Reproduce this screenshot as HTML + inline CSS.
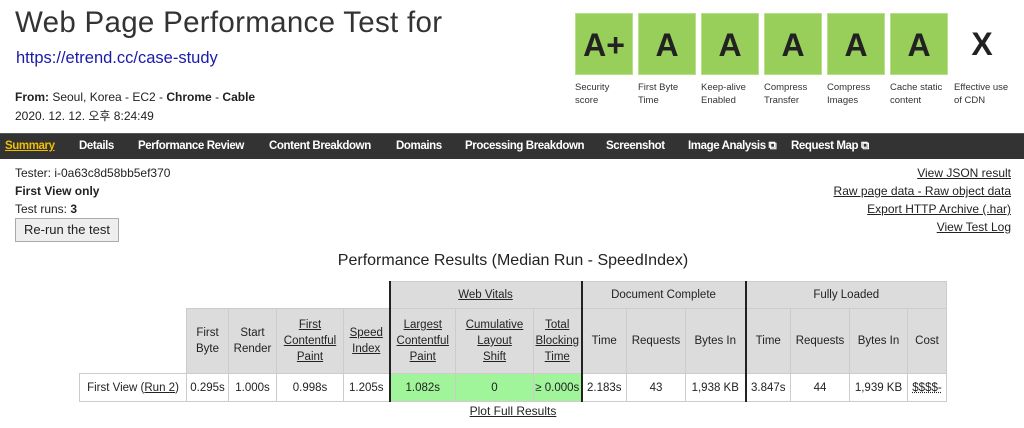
<!DOCTYPE html>
<html><head><meta charset="utf-8"><style>
*{margin:0;padding:0;box-sizing:border-box}
body{width:1024px;height:428px;background:#fff;font-family:"Liberation Sans","Noto Sans CJK KR",sans-serif;color:#222;position:relative;overflow:hidden}
.a{position:absolute;white-space:nowrap}
h1{position:absolute;left:15px;top:6px;font-weight:normal;font-size:29.5px;color:#333;letter-spacing:0.3px}
.url{left:16px;top:49px;font-size:16.5px;color:#1a1aa8}
.s12{font-size:12px}
.g{position:absolute;top:13px;width:58px;height:62px;background:#98cf5a;border:1px solid #b8df8a;font-size:32px;font-weight:bold;color:#222;text-align:center;line-height:62px}
.gl{position:absolute;top:81px;font-size:9.5px;color:#333;line-height:13px}
.nav{position:absolute;left:0;top:133px;width:1024px;height:26px;background:#333;border-top:1px solid #555}
.nav span{position:absolute;top:6px;font-size:11.5px;font-weight:bold;color:#fff;white-space:nowrap;letter-spacing:-0.4px}
.r{right:13px;font-size:12px;text-decoration:underline;color:#222}
table{position:absolute;left:79px;top:281px;border-collapse:collapse;font-size:11.5px}
td,th{border:1px solid #ccc;text-align:center;font-weight:normal;padding:0}
th{background:#dcdcdc;color:#222;line-height:16px}
u{text-decoration:underline}
.bl{border-left:2px solid #222}
.gr{background:#a0f49a}
</style></head><body>
<h1>Web Page Performance Test for</h1>
<div class="a url">https://etrend.cc/case-study</div>
<div class="a s12" style="left:15px;top:90px"><b>From:</b> Seoul, Korea - EC2 - <b>Chrome</b> - <b>Cable</b></div>
<div class="a s12" style="left:15px;top:107px">2020. 12. 12. 오후 8:24:49</div>

<div class="g" style="left:575px">A+</div>
<div class="g" style="left:638px">A</div>
<div class="g" style="left:701px">A</div>
<div class="g" style="left:764px">A</div>
<div class="g" style="left:827px">A</div>
<div class="g" style="left:890px">A</div>
<div class="g" style="left:953px;background:none;border:none">X</div>
<div class="gl" style="left:575px">Security<br>score</div>
<div class="gl" style="left:638px">First Byte<br>Time</div>
<div class="gl" style="left:701px">Keep-alive<br>Enabled</div>
<div class="gl" style="left:764px">Compress<br>Transfer</div>
<div class="gl" style="left:827px">Compress<br>Images</div>
<div class="gl" style="left:890px">Cache static<br>content</div>
<div class="gl" style="left:954px">Effective use<br>of CDN</div>

<div class="nav">
<span style="left:5px;color:#f0c000;text-decoration:underline">Summary</span>
<span style="left:79px">Details</span>
<span style="left:138px">Performance Review</span>
<span style="left:269px">Content Breakdown</span>
<span style="left:396px">Domains</span>
<span style="left:465px">Processing Breakdown</span>
<span style="left:606px">Screenshot</span>
<span style="left:688px">Image Analysis ⧉</span>
<span style="left:791px">Request Map ⧉</span>
</div>

<div class="a s12" style="left:15px;top:166px">Tester: i-0a63c8d58bb5ef370</div>
<div class="a s12" style="left:15px;top:184px;font-weight:bold">First View only</div>
<div class="a s12" style="left:15px;top:202px">Test runs: <b>3</b></div>
<div class="a" style="left:15px;top:218px;width:104px;height:24px;border:1px solid #aaa;background:#eee;font-size:13px;text-align:center;line-height:22px">Re-run the test</div>

<div class="a r" style="top:166px">View JSON result</div>
<div class="a r" style="top:184px">Raw page data - Raw object data</div>
<div class="a r" style="top:202px">Export HTTP Archive (.har)</div>
<div class="a r" style="top:220px">View Test Log</div>

<div class="a" style="left:0;width:1026px;text-align:center;top:252px;font-size:16px;color:#222">Performance Results (Median Run - SpeedIndex)</div>

<table>
<tr style="height:27px"><td colspan="5" style="border:none;border-right:2px solid #222"></td>
<th colspan="3" class="bl" style="border-right:2px solid #222"><u>Web Vitals</u></th>
<th colspan="3">Document Complete</th>
<th colspan="4" class="bl">Fully Loaded</th></tr>
<tr style="height:65px">
<td style="border:none;width:107px"></td>
<th style="width:42px">First<br>Byte</th>
<th style="width:48px">Start<br>Render</th>
<th style="width:67px"><u>First<br>Contentful<br>Paint</u></th>
<th style="width:46px"><u>Speed<br>Index</u></th>
<th class="bl" style="width:66px"><u>Largest<br>Contentful<br>Paint</u></th>
<th style="width:78px"><u>Cumulative<br>Layout<br>Shift</u></th>
<th style="width:48px;border-right:2px solid #222"><u>Total<br>Blocking<br>Time</u></th>
<th style="width:45px">Time</th>
<th style="width:59px">Requests</th>
<th style="width:60px">Bytes In</th>
<th class="bl" style="width:45px">Time</th>
<th style="width:59px">Requests</th>
<th style="width:58px">Bytes In</th>
<th style="width:39px">Cost</th></tr>
<tr style="height:28px">
<td>First View (<u>Run 2</u>)</td><td>0.295s</td><td>1.000s</td><td>0.998s</td><td>1.205s</td>
<td class="bl gr">1.082s</td><td class="gr">0</td><td class="gr" style="border-right:2px solid #222">≥ 0.000s</td>
<td>2.183s</td><td>43</td><td>1,938 KB</td><td class="bl">3.847s</td><td>44</td><td>1,939 KB</td><td><u style="text-decoration-style:dotted">$$$$-</u></td></tr>
</table>
<div class="a" style="left:0;width:1026px;text-align:center;top:404px;font-size:12px;text-decoration:underline">Plot Full Results</div>
</body></html>
